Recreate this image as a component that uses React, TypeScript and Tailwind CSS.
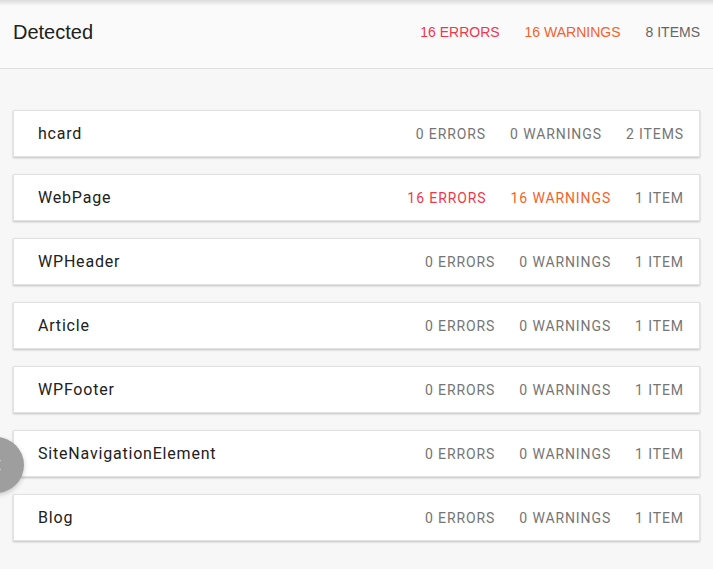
import React from "react";

const rows = [
  { name: "hcard", errors: 0, warnings: 0, items: "2 ITEMS" },
  { name: "WebPage", errors: 16, warnings: 16, items: "1 ITEM" },
  { name: "WPHeader", errors: 0, warnings: 0, items: "1 ITEM" },
  { name: "Article", errors: 0, warnings: 0, items: "1 ITEM" },
  { name: "WPFooter", errors: 0, warnings: 0, items: "1 ITEM" },
  { name: "SiteNavigationElement", errors: 0, warnings: 0, items: "1 ITEM" },
  { name: "Blog", errors: 0, warnings: 0, items: "1 ITEM" },
];

export default function App() {
  return (
    <div className="relative h-[569px] w-[713px] overflow-hidden bg-[#f7f7f7]">
      <div className="relative flex h-[69px] items-center justify-between border-b border-[#dedede] bg-[#fafafa] pb-[4px] pl-[13px] pr-[13px]">
        <div className="pointer-events-none absolute left-0 right-0 top-0 h-[6px] bg-gradient-to-b from-[#dcdcdc] to-[#fafafa]" />
        <div className="relative font-['Liberation_Sans',Arial,sans-serif] text-[20px] text-[#212121]">Detected</div>
        <div className="relative flex gap-[25px] font-['Liberation_Sans',Arial,sans-serif] text-[14px]">
          <span className="text-[#f2364a]">16 ERRORS</span>
          <span className="text-[#f4622c]">16 WARNINGS</span>
          <span className="text-[#666666]">8 ITEMS</span>
        </div>
      </div>
      <div className="flex flex-col gap-[17px] px-[13px] pt-[41px]">
        {rows.map((r) => (
          <div
            key={r.name}
            className="flex h-[47px] items-center justify-between border border-[#e2e2e2] bg-white pl-6 pr-[15px] pt-[1px] shadow-[0_1px_2px_rgba(0,0,0,0.22)]"
          >
            <span className="font-['Roboto',sans-serif] text-[16px] tracking-[0.8px] text-[#212121]">{r.name}</span>
            <div className="flex gap-6 font-['Roboto',sans-serif] text-[14px] tracking-[0.9px]">
              <span className={r.errors ? "text-[#f2364a]" : "text-[#757575]"}>{r.errors} ERRORS</span>
              <span className={r.warnings ? "text-[#f4622c]" : "text-[#757575]"}>{r.warnings} WARNINGS</span>
              <span className="text-[#757575]">{r.items}</span>
            </div>
          </div>
        ))}
      </div>
      <div className="absolute left-[-32px] top-[437px] flex h-[56px] w-[56px] items-center justify-end rounded-full bg-[#9e9e9e] pr-[22px] shadow-[0_2px_5px_rgba(0,0,0,0.2)]">
        <svg width="8" height="12" viewBox="0 0 8 12">
          <path d="M6 1 L1.5 6 L6 11" stroke="white" strokeWidth="2" fill="none" />
        </svg>
      </div>
    </div>
  );
}
